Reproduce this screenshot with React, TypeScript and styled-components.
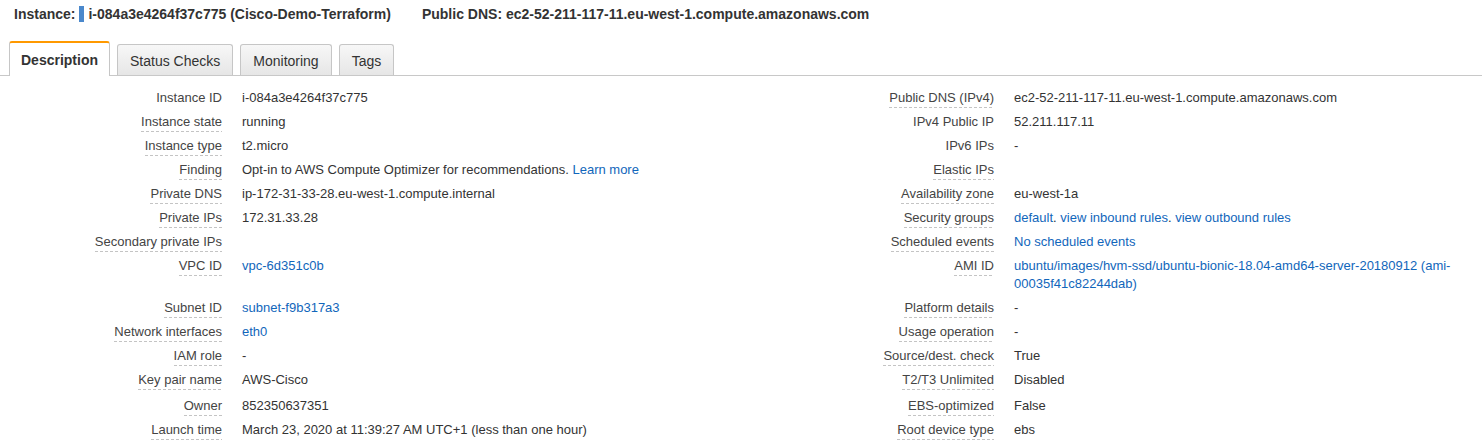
import styled, { createGlobalStyle } from "styled-components";

const Global = createGlobalStyle`
  html, body {
    margin: 0;
    padding: 0;
    overflow: hidden;
    background: #fff;
  }
  body {
    font-family: "Liberation Sans", Arial, Helvetica, sans-serif;
    color: #333;
  }
`;

// header line with instance name and public dns
const Header = styled.div`
  display: flex;
  align-items: center;
  height: 28px;
  padding-left: 14px;
  font-size: 14px;
  font-weight: bold;
  color: #333;
  white-space: nowrap;
`;

const Marker = styled.span`
  display: inline-block;
  width: 5px;
  height: 16px;
  margin: 0 4px 0 4px;
  background: #4a88cc;
`;

const HeaderPart = styled.span<{ $gap?: number }>`
  margin-left: ${(p) => p.$gap ?? 0}px;
`;

const TabBar = styled.div`
  display: flex;
  align-items: flex-end;
  gap: 7px;
  height: 34px;
  margin-top: 13px;
  padding-left: 9px;
  border-bottom: 1px solid #c8c8c8;
`;

const Tab = styled.div<{ $active?: boolean }>`
  display: flex;
  align-items: center;
  box-sizing: border-box;
  font-size: 14px;
  color: #333;
  border: 1px solid #c6c6c6;
  border-bottom: none;
  border-radius: 3px 3px 0 0;
  ${(p) =>
    p.$active
      ? `
    height: 35px;
    margin-bottom: -1px;
    padding: 0 11px;
    font-weight: bold;
    background: #fff;
    border-top: 2px solid #f90;
  `
      : `
    height: 31px;
    padding: 1px 12px 0;
    background: linear-gradient(#f7f7f7, #e6e6e6);
  `}
`;

const Details = styled.div`
  padding-top: 10px;
`;

const Row = styled.div<{ $extra?: number }>`
  display: grid;
  grid-template-columns: 222px 588px 184px 1fr;
  padding: 3px 0 ${(p) => 3 + (p.$extra ?? 0)}px;
  font-size: 13px;
  line-height: 18px;
`;

const LabelCell = styled.div`
  height: 18px;
  text-align: right;
`;

const Label = styled.span<{ $dashed?: boolean }>`
  display: inline-block;
  vertical-align: top;
  color: #444;
  white-space: nowrap;
  padding-bottom: 1px;
  background-image: ${(p) =>
    p.$dashed
      ? "repeating-linear-gradient(to right, #c4c4c4 0 3px, transparent 3px 5px)"
      : "none"};
  background-size: 100% 1px;
  background-repeat: no-repeat;
  background-position: left bottom;
`;

const Value = styled.div`
  padding-left: 20px;
  color: #333;
`;

const Link = styled.a`
  color: #1166bb;
  text-decoration: none;
`;

type Field = {
  label: string;
  dashed?: boolean;
  value: React.ReactNode;
};

type Line = { left: Field; right: Field; extra?: number };

const lines: Line[] = [
  {
    left: { label: "Instance ID", value: "i-084a3e4264f37c775" },
    right: {
      label: "Public DNS (IPv4)",
      dashed: true,
      value: "ec2-52-211-117-11.eu-west-1.compute.amazonaws.com",
    },
  },
  {
    left: { label: "Instance state", dashed: true, value: "running" },
    right: { label: "IPv4 Public IP", value: "52.211.117.11" },
  },
  {
    left: { label: "Instance type", dashed: true, value: "t2.micro" },
    right: { label: "IPv6 IPs", value: "-" },
  },
  {
    left: {
      label: "Finding",
      dashed: true,
      value: (
        <>
          Opt-in to AWS Compute Optimizer for recommendations.{" "}
          <Link>Learn more</Link>
        </>
      ),
    },
    right: { label: "Elastic IPs", dashed: true, value: "" },
  },
  {
    left: {
      label: "Private DNS",
      dashed: true,
      value: "ip-172-31-33-28.eu-west-1.compute.internal",
    },
    right: { label: "Availability zone", dashed: true, value: "eu-west-1a" },
  },
  {
    left: { label: "Private IPs", dashed: true, value: "172.31.33.28" },
    right: {
      label: "Security groups",
      dashed: true,
      value: (
        <>
          <Link>default</Link>. <Link>view inbound rules</Link>.{" "}
          <Link>view outbound rules</Link>
        </>
      ),
    },
  },
  {
    left: { label: "Secondary private IPs", dashed: true, value: "" },
    right: {
      label: "Scheduled events",
      dashed: true,
      value: <Link>No scheduled events</Link>,
    },
  },
  {
    left: { label: "VPC ID", dashed: true, value: <Link>vpc-6d351c0b</Link> },
    right: {
      label: "AMI ID",
      dashed: true,
      value: (
        <Link>
          ubuntu/images/hvm-ssd/ubuntu-bionic-18.04-amd64-server-20180912 (ami-
          <wbr />
          00035f41c82244dab)
        </Link>
      ),
    },
  },
  {
    left: { label: "Subnet ID", dashed: true, value: <Link>subnet-f9b317a3</Link> },
    right: { label: "Platform details", dashed: true, value: "-" },
  },
  {
    left: { label: "Network interfaces", dashed: true, value: <Link>eth0</Link> },
    right: { label: "Usage operation", dashed: true, value: "-" },
  },
  {
    left: { label: "IAM role", dashed: true, value: "-" },
    right: { label: "Source/dest. check", dashed: true, value: "True" },
  },
  {
    left: { label: "Key pair name", dashed: true, value: "AWS-Cisco" },
    right: { label: "T2/T3 Unlimited", dashed: true, value: "Disabled" },
    extra: 2,
  },
  {
    left: { label: "Owner", dashed: true, value: "852350637351" },
    right: { label: "EBS-optimized", dashed: true, value: "False" },
  },
  {
    left: {
      label: "Launch time",
      dashed: true,
      value: "March 23, 2020 at 11:39:27 AM UTC+1 (less than one hour)",
    },
    right: { label: "Root device type", dashed: true, value: "ebs" },
  },
  {
    left: { label: "Termination protection", dashed: true, value: "False" },
    right: { label: "Root device", dashed: true, value: <Link>/dev/sda1</Link> },
  },
];

const Cells = ({ field }: { field: Field }) => (
  <>
    <LabelCell>
      <Label $dashed={field.dashed}>{field.label}</Label>
    </LabelCell>
    <Value>{field.value}</Value>
  </>
);

export default function App() {
  return (
    <>
      <Global />
      <Header>
        <span>Instance:</span>
        <Marker />
        <span>i-084a3e4264f37c775 (Cisco-Demo-Terraform)</span>
        <HeaderPart $gap={31}>
          Public DNS: ec2-52-211-117-11.eu-west-1.compute.amazonaws.com
        </HeaderPart>
      </Header>
      <TabBar>
        <Tab $active>Description</Tab>
        <Tab>Status Checks</Tab>
        <Tab>Monitoring</Tab>
        <Tab>Tags</Tab>
      </TabBar>
      <Details>
        {lines.map((l) => (
          <Row key={l.left.label} $extra={l.extra}>
            <Cells field={l.left} />
            <Cells field={l.right} />
          </Row>
        ))}
      </Details>
    </>
  );
}
